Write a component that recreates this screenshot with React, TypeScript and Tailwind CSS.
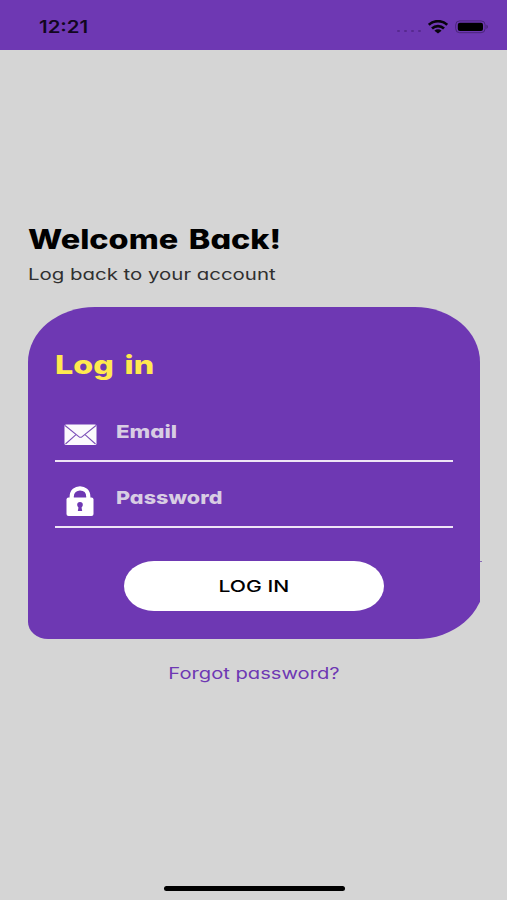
import type { ReactNode } from "react";

const EnvelopeIcon = () => (
  <svg width="33" height="22" viewBox="0 0 33 22">
    <rect x="0.5" y="0.5" width="32" height="20.5" rx="1.5" fill="#fbf9fd" />
    <path
      d="M1 1.5 L14.8 12.6 Q16.5 14 18.2 12.6 L32 1.5 M1.5 20 L12 10.7 M31.5 20 L21 10.7"
      fill="none"
      stroke="#7b4fb8"
      strokeWidth="1.1"
    />
  </svg>
);

const LockIcon = () => (
  <svg width="28" height="31" viewBox="0 0 28 31">
    <path
      d="M5.7 13 V10.5 C5.7 -0.4 22.3 -0.4 22.3 10.5 V13"
      fill="none"
      stroke="#fff"
      strokeWidth="4.2"
    />
    <rect x="0.5" y="11.4" width="27" height="18.6" rx="2" fill="#fff" />
    <circle cx="14" cy="18.8" r="2.8" fill="#6e38b3" />
    <path d="M12.9 19 H15.1 L16.2 25 H11.8 Z" fill="#6e38b3" />
  </svg>
);

const WifiIcon = () => (
  <svg width="20" height="14" viewBox="0 0 20 14">
    <g fill="none" stroke="#08040d" strokeWidth="2.7">
      <path d="M0.8 4.8 C6 0 14 0 19.2 4.8" />
      <path d="M4 8.4 C7.3 5.3 12.7 5.3 16 8.4" />
    </g>
    <path d="M10 13.6 L6.4 10.7 C8.5 8.9 11.5 8.9 13.6 10.7 Z" fill="#08040d" />
  </svg>
);

const BatteryIcon = () => (
  <svg width="34" height="14" viewBox="0 0 34 14">
    <rect
      x="0.7"
      y="0.9"
      width="29.4"
      height="11.8"
      rx="4"
      fill="none"
      stroke="#4a267a"
      strokeWidth="1"
    />
    <rect x="2.8" y="2.7" width="25.2" height="8.2" rx="2" fill="#000" />
    <path d="M31.4 4.7 C33.4 5.4 33.4 8.2 31.4 8.9 Z" fill="#4a267a" />
  </svg>
);

type FieldProps = { icon: ReactNode; children: ReactNode };

const Field = ({ icon, children }: FieldProps) => (
  <div className="flex h-[66px] items-end border-b-2 border-[#eee5f6]">
    <div className="flex w-[61px]">{icon}</div>
    {children}
  </div>
);

const App = () => {
  return (
    <div className="flex h-[900px] w-[507px] flex-col overflow-hidden bg-[#d5d5d5] font-['Inter',sans-serif] [font-feature-settings:'cv11']">
      <header className="flex h-[50px] shrink-0 items-center justify-between bg-[#6e38b3] pt-[3px] pr-[18px] pl-[39px]">
        <span className="inline-block origin-left scale-x-[1.2] text-[17px] leading-5 font-semibold text-[#12071f]">
          12:21
        </span>
        <div className="flex items-center gap-[7px]">
          <div className="flex gap-[4px] pt-2">
            <span className="h-[2px] w-[3px] rounded-full bg-[#57298f]" />
            <span className="h-[2px] w-[3px] rounded-full bg-[#57298f]" />
            <span className="h-[2px] w-[3px] rounded-full bg-[#57298f]" />
            <span className="h-[2px] w-[3px] rounded-full bg-[#57298f]" />
          </div>
          <WifiIcon />
          <BatteryIcon />
        </div>
      </header>

      <main className="flex flex-col items-start pt-[172px] pl-7">
        <h1 className="origin-left scale-x-[1.2] text-[27px] leading-9 font-extrabold [word-spacing:3px] whitespace-nowrap text-black">
          Welcome Back!
        </h1>
        <p className="mt-1 origin-left scale-x-[1.275] text-[16px] leading-6 whitespace-nowrap text-[#303030]">
          Log back to your account
        </p>

        {/* The bottom right curve runs a little past the card's edge */}
        <section className="relative mt-[21px]">
          <div className="h-[332px] w-[452px] overflow-hidden rounded-tl-[67px_55px] rounded-tr-[65px_55px]">
            <div className="flex h-full w-[456px] flex-col rounded-br-[67px_57px] rounded-bl-[20px_17px] bg-[#6e38b3] pr-[31px] pl-[27px]">
              <h2 className="mt-[40px] origin-left scale-x-[1.24] self-start text-[26px] leading-9 font-extrabold [word-spacing:3px] whitespace-nowrap text-[#ffe94f]">
                Log in
              </h2>
              <form className="mt-[13px] flex flex-col">
                <Field
                  icon={
                    <div className="mb-[14px] ml-[9px]">
                      <EnvelopeIcon />
                    </div>
                  }
                >
                  <span className="mb-[16px] origin-left scale-x-[1.24] text-[18px] leading-6 font-extrabold text-[#d8cde3]">
                    Email
                  </span>
                </Field>
                <Field
                  icon={
                    <div className="mb-[9px] ml-[11px]">
                      <LockIcon />
                    </div>
                  }
                >
                  <span className="mb-[16px] origin-left scale-x-[1.2] text-[18px] leading-6 font-extrabold text-[#d8cde3]">
                    Password
                  </span>
                </Field>
                <button
                  type="button"
                  className="mt-[33px] ml-[69px] h-[50px] w-[260px] rounded-[30px/25px] bg-white text-[16px] font-medium text-black"
                >
                  <span className="inline-block scale-x-[1.32]">LOG IN</span>
                </button>
              </form>
            </div>
          </div>
          <span className="absolute top-[254px] left-[452px] h-px w-[2px] bg-[#8a6bb8]" />
        </section>

        <a
          href="#"
          className="mt-[22px] w-[452px] text-center text-[16px] leading-6 text-[#6e38b3]"
        >
          <span className="inline-block scale-x-[1.26]">Forgot password?</span>
        </a>
      </main>

      <div className="mx-auto mt-auto mb-[9px] h-[5px] w-[181px] translate-x-px rounded-full bg-black" />
    </div>
  );
};

export default App;
